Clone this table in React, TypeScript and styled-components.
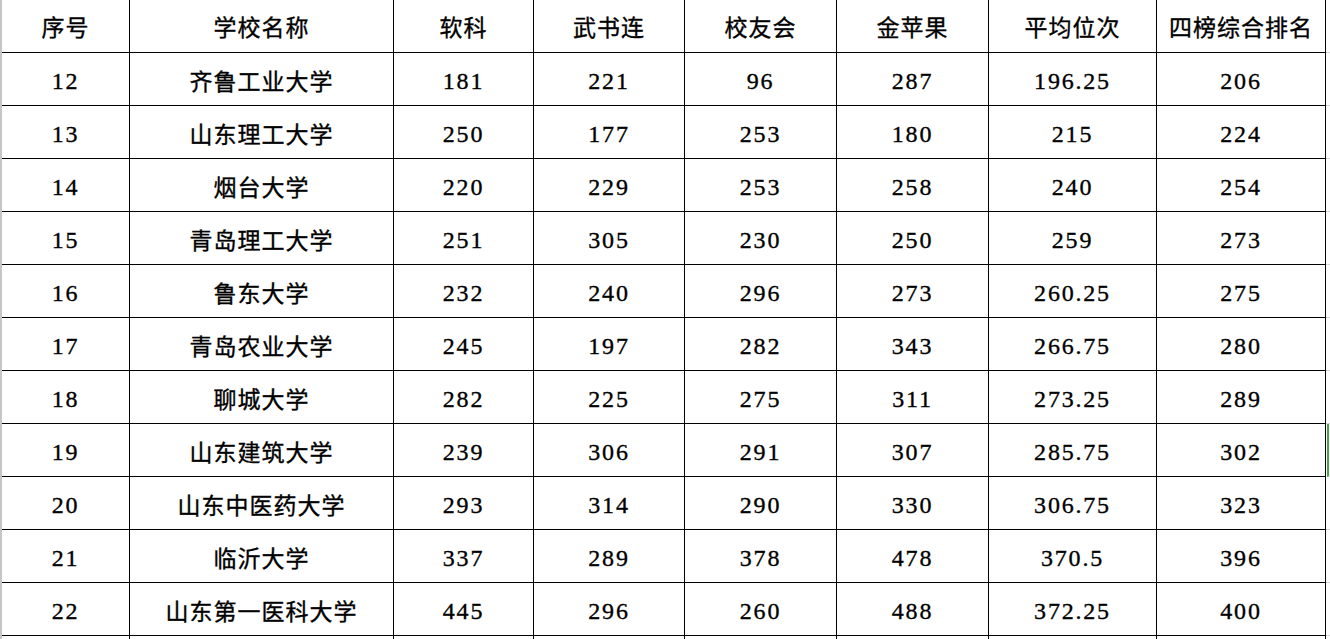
import React from "react";
import styled, {createGlobalStyle} from "styled-components";

const GlobalStyle = createGlobalStyle`
  html, body {
    margin: 0;
    padding: 0;
    background: #ffffff;
    overflow: hidden;
  }
`;

type Row = {
	no: number;
	name: string;
	ruanke: string;
	wushulian: string;
	xiaoyouhui: string;
	jinpingguo: string;
	avg: string;
	rank: string;
};

const headers = ["序号", "学校名称", "软科", "武书连", "校友会", "金苹果", "平均位次", "四榜综合排名"];

const rows: Row[] = [
	{no: 12, name: "齐鲁工业大学", ruanke: "181", wushulian: "221", xiaoyouhui: "96", jinpingguo: "287", avg: "196.25", rank: "206"},
	{no: 13, name: "山东理工大学", ruanke: "250", wushulian: "177", xiaoyouhui: "253", jinpingguo: "180", avg: "215", rank: "224"},
	{no: 14, name: "烟台大学", ruanke: "220", wushulian: "229", xiaoyouhui: "253", jinpingguo: "258", avg: "240", rank: "254"},
	{no: 15, name: "青岛理工大学", ruanke: "251", wushulian: "305", xiaoyouhui: "230", jinpingguo: "250", avg: "259", rank: "273"},
	{no: 16, name: "鲁东大学", ruanke: "232", wushulian: "240", xiaoyouhui: "296", jinpingguo: "273", avg: "260.25", rank: "275"},
	{no: 17, name: "青岛农业大学", ruanke: "245", wushulian: "197", xiaoyouhui: "282", jinpingguo: "343", avg: "266.75", rank: "280"},
	{no: 18, name: "聊城大学", ruanke: "282", wushulian: "225", xiaoyouhui: "275", jinpingguo: "311", avg: "273.25", rank: "289"},
	{no: 19, name: "山东建筑大学", ruanke: "239", wushulian: "306", xiaoyouhui: "291", jinpingguo: "307", avg: "285.75", rank: "302"},
	{no: 20, name: "山东中医药大学", ruanke: "293", wushulian: "314", xiaoyouhui: "290", jinpingguo: "330", avg: "306.75", rank: "323"},
	{no: 21, name: "临沂大学", ruanke: "337", wushulian: "289", xiaoyouhui: "378", jinpingguo: "478", avg: "370.5", rank: "396"},
	{no: 22, name: "山东第一医科大学", ruanke: "445", wushulian: "296", xiaoyouhui: "260", jinpingguo: "488", avg: "372.25", rank: "400"},
];

const ACTIVE_ROW = 19;

const Sheet = styled.div`
  display: grid;
  grid-template-columns: 2px 128px 264px 140px 151px 152px 152px 168px 169px 4px;
  grid-auto-rows: 53px;
  width: 1330px;
  font-family: "Liberation Serif", "Noto Sans CJK SC", serif;
  color: #000000;
`;

const Gutter = styled.div`
  background: #c6c6c6;
`;

const Cell = styled.div<{$head?: boolean; $num?: boolean}>`
  display: flex;
  align-items: center;
  justify-content: center;
  border-right: 1px solid #000000;
  border-bottom: 1px solid #000000;
  font-size: ${({$num}) => ($num ? "24px" : "23px")};
  letter-spacing: ${({$num}) => ($num ? "1.8px" : "1px")};
  -webkit-text-stroke: 0.35px #000000;
  white-space: nowrap;
  padding-top: ${({$head, $num}) => ($head ? "0" : $num ? "4px" : "2px")};
`;

const Tail = styled.div<{$active?: boolean}>`
  border-bottom: 1px solid #d4d4d4;
  ${({$active}) => $active && `
    border-left: 2px solid #4aa34a;
    margin-left: 1px;
  `}
`;

const HeadRow = () => (
	<>
		<Gutter/>
		{headers.map(h => (
			<Cell key={h} $head>{h}</Cell>
		))}
		<Tail/>
	</>
);

const DataRow = ({row}: {row: Row}) => (
	<>
		<Gutter/>
		<Cell $num>{row.no}</Cell>
		<Cell>{row.name}</Cell>
		<Cell $num>{row.ruanke}</Cell>
		<Cell $num>{row.wushulian}</Cell>
		<Cell $num>{row.xiaoyouhui}</Cell>
		<Cell $num>{row.jinpingguo}</Cell>
		<Cell $num>{row.avg}</Cell>
		<Cell $num>{row.rank}</Cell>
		<Tail $active={row.no === ACTIVE_ROW}/>
	</>
);

const EmptyRow = () => (
	<>
		<Gutter/>
		{headers.map(h => (
			<Cell key={h}/>
		))}
		<Tail/>
	</>
);

export default function App() {
	return (
		<>
			<GlobalStyle/>
			<Sheet>
				<HeadRow/>
				{rows.map(r => (
					<DataRow key={r.no} row={r}/>
				))}
				<EmptyRow/>
			</Sheet>
		</>
	);
}
